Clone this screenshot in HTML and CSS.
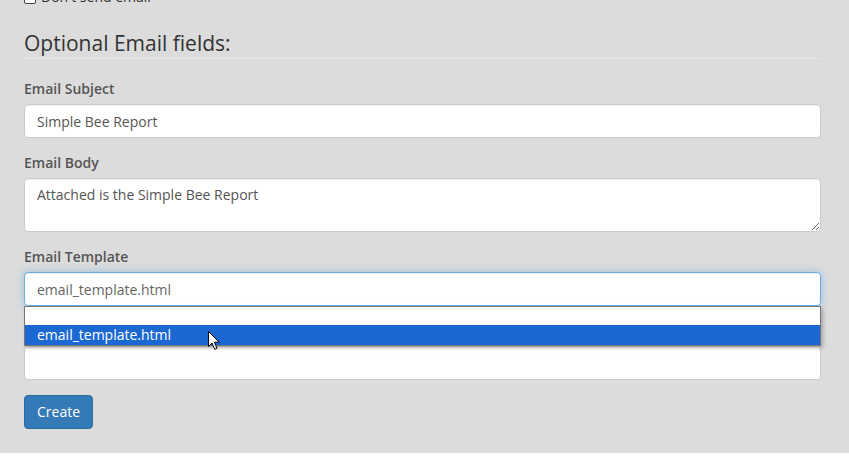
FILE: index.html
```html
<!DOCTYPE html>
<html>
<head>
<meta charset="utf-8">
<link rel="stylesheet" href="styles.css">
</head>
<body>
<div class="page">
  <div class="checkbox-row"><span class="check"></span><span>Don't send email</span></div>
  <div class="legend">Optional Email fields:</div>
  <div class="form-group">
    <label class="label">Email Subject</label>
    <input class="control" type="text" value="Simple Bee Report">
  </div>
  <div class="form-group">
    <label class="label">Email Body</label>
    <textarea class="control area" rows="2">Attached is the Simple Bee Report</textarea>
  </div>
  <div class="form-group">
    <label class="label">Email Template</label>
    <div class="combo">
      <input class="control focus" type="text" value="email_template.html">
      <div class="menu">
        <div class="menu-empty"></div>
        <div class="menu-item">email_template.html</div>
        <svg class="cursor" width="14" height="21" viewBox="0 0 14 21"><path d="M1.5 1.5 L1.5 16.5 L5 13 L7.7 19.3 L10 18.3 L7.4 12.2 L12.2 12.2 Z" fill="#fff" stroke="#000" stroke-width="1" stroke-linejoin="miter"/></svg>
      </div>
    </div>
  </div>
  <div class="form-group">
    <label class="label">&nbsp;</label>
    <input class="control" type="text" value="">
  </div>
  <button class="btn">Create</button>
</div>
</body>
</html>
```
FILE: styles.css
```css
* { box-sizing: border-box; }
html, body { margin: 0; padding: 0; background: #ffffff; }
body {
  font-family: "Open Sans", "Liberation Sans", sans-serif;
  font-size: 14px;
  line-height: 20px;
  color: #333333;
}
.page {
  background: #dcdcdc;
  padding: 0 28px 24px 24px;
  height: 453px;
  overflow: hidden;
}
.checkbox-row {
  margin-top: -13px;
  height: 20px;
  display: flex;
  align-items: center;
  gap: 5px;
  color: #333;
}
.check {
  width: 12px;
  height: 12px;
  border: 1px solid #444;
  border-radius: 2px;
  background: #fff;
  margin-top: 2px;
}
.legend {
  margin-top: 21px;
  font-size: 21px;
  line-height: 30px;
  border-bottom: 1px solid #e5e5e5;
  margin-bottom: 20px;
  color: #333;
}
.form-group { margin-bottom: 15px; }
.label {
  display: block;
  margin-bottom: 5px;
  font-weight: 600;
  color: #555;
  height: 20px;
}
.control {
  display: block;
  width: 100%;
  height: 34px;
  padding: 6px 12px;
  font-family: inherit;
  font-size: 14px;
  line-height: 20px;
  color: #555;
  background: #fff;
  border: 1px solid #ccc;
  border-radius: 4px;
  box-shadow: inset 0 1px 1px rgba(0,0,0,.075);
  margin: 0;
  outline: none;
}
.area { height: 54px; resize: vertical; }
.focus {
  color: #666;
  border-color: #66afe9;
  box-shadow: inset 0 1px 1px rgba(0,0,0,.075), 0 0 8px rgba(102,175,233,.6);
}
.combo { position: relative; }
.menu {
  position: absolute;
  top: 34px;
  left: 0;
  right: 0;
  z-index: 5;
  background: #fff;
  border: 1px solid #767676;
  box-shadow: 2px 2px 4px rgba(0,0,0,.25);
}
.menu-empty { height: 18px; }
.menu-item {
  height: 20px;
  line-height: 20px;
  padding-left: 12px;
  background: #1b68d3;
  color: #fff;
}
.cursor {
  position: absolute;
  left: 182px;
  top: 23px;
  z-index: 6;
}
.btn {
  display: inline-block;
  font-family: inherit;
  font-size: 14px;
  line-height: 20px;
  padding: 6px 12px;
  color: #fff;
  background: #337ab7;
  border: 1px solid #2e6da4;
  border-radius: 4px;
  height: 34px;
}
```
